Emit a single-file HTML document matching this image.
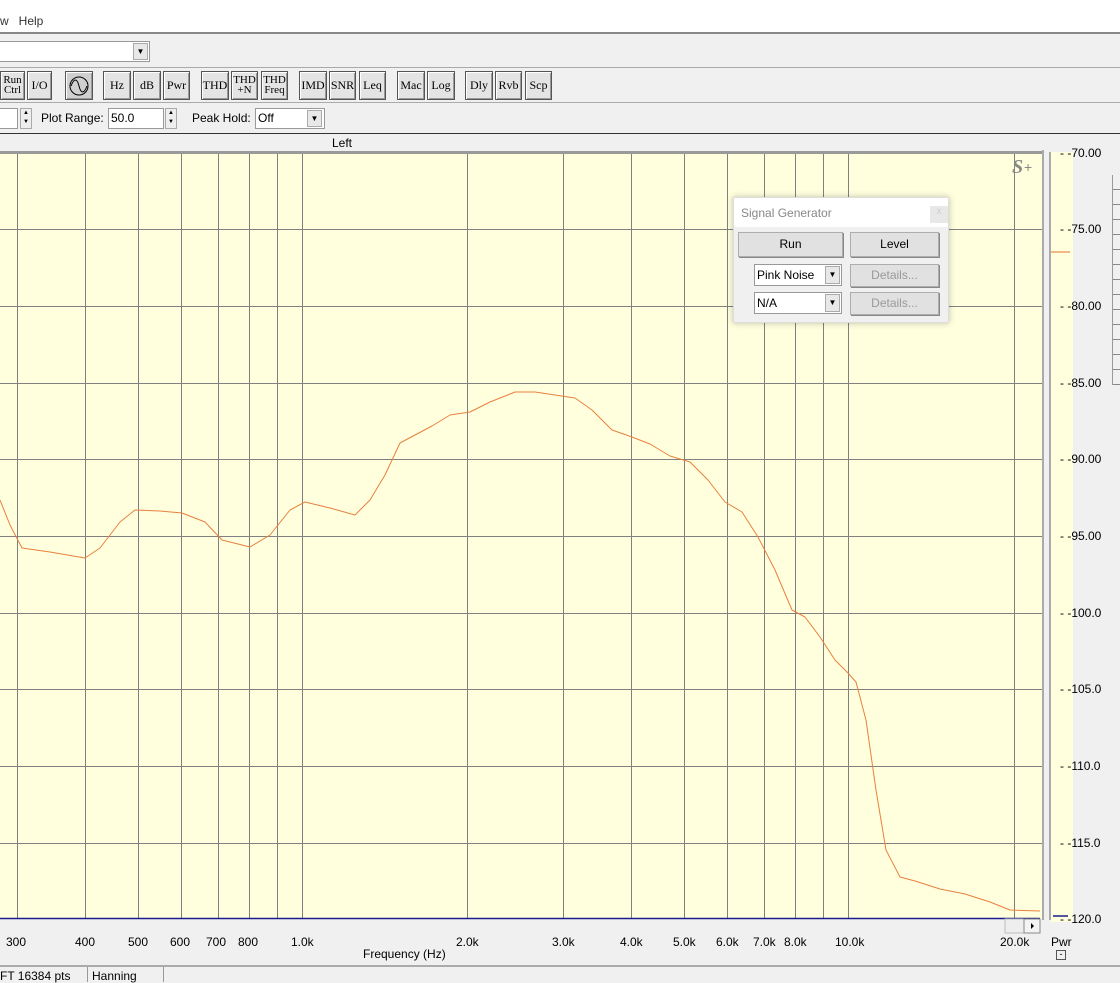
<!DOCTYPE html>
<html><head><meta charset="utf-8"><style>
*{margin:0;padding:0;box-sizing:border-box}
body{width:1120px;height:982px;background:#f0f0f0;position:relative;overflow:hidden;font-family:"Liberation Sans",sans-serif;font-size:12px;color:#000}
.a{position:absolute}
.btn{position:absolute;top:71px;height:29px;background:#e4e4e4;border:1px solid #555;box-shadow:inset 1px 1px 0 #fff,inset -1px -1px 0 #999;font-family:"Liberation Serif",serif;font-size:12px;text-align:center;line-height:27px}
.btn.t{line-height:10px;padding-top:3px;font-size:11px}
.inp{position:absolute;background:#fff;border:1px solid #999;font-size:12px;padding-left:2px}
.dd{position:absolute;width:15px;background:#e8e8e8;border:1px solid #aaa;font-size:8px;text-align:center}
.wb{position:absolute;background:#e1e1e1;border:1px solid #adadad;box-shadow:1px 1px 0 #888;text-align:center;font-size:12px}
.yl{position:absolute;left:1060px;font-size:12px}
.xl{position:absolute;top:935px;font-size:12px}
</style></head><body>
<div class="a" style="left:0;top:0;width:1120px;height:32px;background:#fff"></div>
<div class="a" style="left:0;top:14px;font-size:12px;color:#333">w&nbsp;&nbsp;&nbsp;Help</div>
<div class="a" style="left:0;top:32px;width:1120px;height:2px;background:#888"></div>
<div class="inp" style="left:-2px;top:41px;width:152px;height:21px"></div>
<div class="dd" style="left:133px;top:43px;height:17px;line-height:15px">▼</div>
<div class="a" style="left:0;top:67px;width:1120px;height:1px;background:#aaa"></div>
<div class="btn t" style="left:0;width:25px">Run<br>Ctrl</div>
<div class="btn" style="left:27px;width:25px">I/O</div>
<div class="btn" style="left:65px;width:28px;background:#d0d0d0"><svg width="22" height="22" viewBox="0 0 22 22" style="margin-top:3px"><circle cx="11" cy="11" r="9" fill="none" stroke="#000"/><path d="M3 11 C6 3,9 3,11 11 S16 19,19 11" fill="none" stroke="#000"/></svg></div>
<div class="btn" style="left:103px;width:28px">Hz</div>
<div class="btn" style="left:133px;width:28px">dB</div>
<div class="btn" style="left:163px;width:27px">Pwr</div>
<div class="btn" style="left:201px;width:28px">THD</div>
<div class="btn t" style="left:231px;width:27px">THD<br>+N</div>
<div class="btn t" style="left:261px;width:27px">THD<br>Freq</div>
<div class="btn" style="left:299px;width:28px">IMD</div>
<div class="btn" style="left:329px;width:27px">SNR</div>
<div class="btn" style="left:359px;width:27px">Leq</div>
<div class="btn" style="left:397px;width:28px">Mac</div>
<div class="btn" style="left:427px;width:28px">Log</div>
<div class="btn" style="left:465px;width:28px">Dly</div>
<div class="btn" style="left:495px;width:27px">Rvb</div>
<div class="btn" style="left:525px;width:27px">Scp</div>
<div class="a" style="left:0;top:102px;width:1120px;height:1px;background:#aaa"></div>
<div class="inp" style="left:-2px;top:108px;width:20px;height:21px"></div>
<div class="a" style="left:20px;top:108px;width:12px;height:21px;border:1px solid #aaa;background:#eee;font-size:6px;line-height:9px;text-align:center">▲<br>▼</div>
<div class="a" style="left:41px;top:111px">Plot Range:</div>
<div class="inp" style="left:108px;top:108px;width:56px;height:21px;line-height:19px">50.0</div>
<div class="a" style="left:165px;top:108px;width:12px;height:21px;border:1px solid #aaa;background:#eee;font-size:6px;line-height:9px;text-align:center">▲<br>▼</div>
<div class="a" style="left:192px;top:111px">Peak Hold:</div>
<div class="inp" style="left:255px;top:108px;width:70px;height:21px;line-height:19px">Off</div>
<div class="dd" style="left:307px;top:110px;height:17px;line-height:15px">▼</div>
<div class="a" style="left:0;top:133px;width:1120px;height:1px;background:#333"></div>
<div class="a" style="left:332px;top:136px">Left</div>
<svg class="a" style="left:0;top:150px" width="1120" height="790">
<rect x="0" y="2" width="1042" height="767" fill="#ffffde"/>
<line x1="0" y1="2.5" x2="1042" y2="2.5" stroke="#999" stroke-width="3"/>
<line x1="1043" y1="0" x2="1043" y2="770" stroke="#aaa" stroke-width="2"/>
<g stroke="#808080" stroke-width="1">
<line x1="0" x2="1042" y1="79.5" y2="79.5"/><line x1="0" x2="1042" y1="156.5" y2="156.5"/><line x1="0" x2="1042" y1="233.5" y2="233.5"/><line x1="0" x2="1042" y1="309.5" y2="309.5"/><line x1="0" x2="1042" y1="386.5" y2="386.5"/><line x1="0" x2="1042" y1="463.5" y2="463.5"/><line x1="0" x2="1042" y1="539.5" y2="539.5"/><line x1="0" x2="1042" y1="616.5" y2="616.5"/><line x1="0" x2="1042" y1="693.5" y2="693.5"/>
<line y1="4" y2="768" x1="17.5" x2="17.5"/><line y1="4" y2="768" x1="85.5" x2="85.5"/><line y1="4" y2="768" x1="138.5" x2="138.5"/><line y1="4" y2="768" x1="181.5" x2="181.5"/><line y1="4" y2="768" x1="218.5" x2="218.5"/><line y1="4" y2="768" x1="249.5" x2="249.5"/><line y1="4" y2="768" x1="277.5" x2="277.5"/><line y1="4" y2="768" x1="302.5" x2="302.5"/><line y1="4" y2="768" x1="467.5" x2="467.5"/><line y1="4" y2="768" x1="563.5" x2="563.5"/><line y1="4" y2="768" x1="631.5" x2="631.5"/><line y1="4" y2="768" x1="684.5" x2="684.5"/><line y1="4" y2="768" x1="727.5" x2="727.5"/><line y1="4" y2="768" x1="764.5" x2="764.5"/><line y1="4" y2="768" x1="795.5" x2="795.5"/><line y1="4" y2="768" x1="823.5" x2="823.5"/><line y1="4" y2="768" x1="848.5" x2="848.5"/><line y1="4" y2="768" x1="1014.5" x2="1014.5"/>
</g>
<line x1="0" x2="1040" y1="768.5" y2="768.5" stroke="#1a1a8c" stroke-width="1.5"/>
<path d="M0 350 L10 375 L22 398 L50 402 L85 408 L100 398 L120 372 L135 360 L160 361 L182 363 L205 372 L222 390 L250 397 L270 385 L290 360 L305 352 L330 358 L355 365 L370 350 L385 325 L400 293 L415 285 L432 276 L450 265 L470 262 L490 252 L515 242 L535 242 L555 245 L575 248 L592 260 L612 280 L632 287 L650 294 L670 306 L690 312 L708 330 L725 352 L742 362 L758 387 L775 420 L792 460 L805 467 L820 487 L835 510 L848 523 L856 532 L866 570 L876 640 L886 700 L900 727 L915 731 L940 739 L965 744 L990 752 L1010 760 L1040 761" fill="none" stroke="#e8803f" stroke-width="1" stroke-linejoin="round"/>
<text x="1012" y="23" font-family="Liberation Serif" font-style="italic" font-weight="bold" font-size="20" fill="#888">S</text><text x="1024" y="22" font-size="14" fill="#888">+</text>
<rect x="1005" y="769" width="19" height="14" fill="#eee" stroke="#bbb"/><rect x="1024" y="769" width="16" height="14" fill="#f4f4f4" stroke="#888"/><path d="M1031 773 l3 3 l-3 3z" fill="#000"/>
<rect x="1049" y="2" width="2" height="768" fill="#aaa"/>
<rect x="1051" y="2" width="22" height="770" fill="#ffffde"/>
<line x1="1051" x2="1070" y1="102" y2="102" stroke="#e07030"/>
<line x1="1053" x2="1068" y1="766" y2="766" stroke="#1a1a8c" stroke-width="1.5"/>
</svg>
<div class="yl" style="top:146px">- -70.00</div>
<div class="yl" style="top:222px">- -75.00</div>
<div class="yl" style="top:299px">- -80.00</div>
<div class="yl" style="top:376px">- -85.00</div>
<div class="yl" style="top:452px">- -90.00</div>
<div class="yl" style="top:529px">- -95.00</div>
<div class="yl" style="top:606px">- -100.0</div>
<div class="yl" style="top:682px">- -105.0</div>
<div class="yl" style="top:759px">- -110.0</div>
<div class="yl" style="top:836px">- -115.0</div>
<div class="yl" style="top:912px">- -120.0</div>
<div class="a" style="left:1112px;top:175px;width:8px;height:210px;border-left:1px solid #999;background:repeating-linear-gradient(#f0f0f0 0 14px,#888 14px 15px)"></div>
<div class="xl" style="left:6px">300</div><div class="xl" style="left:75px">400</div><div class="xl" style="left:128px">500</div><div class="xl" style="left:170px">600</div><div class="xl" style="left:206px">700</div><div class="xl" style="left:238px">800</div><div class="xl" style="left:291px">1.0k</div><div class="xl" style="left:456px">2.0k</div><div class="xl" style="left:552px">3.0k</div><div class="xl" style="left:620px">4.0k</div><div class="xl" style="left:673px">5.0k</div><div class="xl" style="left:716px">6.0k</div><div class="xl" style="left:753px">7.0k</div><div class="xl" style="left:784px">8.0k</div><div class="xl" style="left:835px">10.0k</div><div class="xl" style="left:1000px">20.0k</div>
<div class="a" style="left:1051px;top:935px">Pwr</div>
<div class="a" style="left:1056px;top:950px;width:10px;height:10px;border:1px solid #555;font-size:9px;line-height:7px;text-align:center">-</div>
<div class="a" style="left:363px;top:947px">Frequency (Hz)</div>
<div class="a" style="left:0;top:965px;width:1120px;height:2px;background:#aaa"></div>
<div class="a" style="left:0;top:969px">FT 16384 pts</div>
<div class="a" style="left:87px;top:967px;width:1px;height:15px;background:#999"></div>
<div class="a" style="left:92px;top:969px">Hanning</div>
<div class="a" style="left:163px;top:967px;width:1px;height:15px;background:#999"></div>
<div class="a" style="left:733px;top:197px;width:216px;height:126px;background:#f0f0f0;border:1px solid #ddd;box-shadow:0 0 6px rgba(0,0,0,.25)">
<div class="a" style="left:0;top:0;width:214px;height:29px;background:#fff"></div>
<div class="a" style="left:7px;top:8px;color:#888">Signal Generator</div>
<div class="a" style="left:196px;top:8px;width:18px;height:17px;background:#e8e8e8;color:#ccc;text-align:center;font-size:10px">x</div>
<div class="wb" style="left:4px;top:34px;width:105px;height:25px;line-height:23px">Run</div>
<div class="wb" style="left:116px;top:34px;width:89px;height:25px;line-height:23px">Level</div>
<div class="inp" style="left:20px;top:66px;width:88px;height:22px;line-height:20px">Pink Noise</div>
<div class="dd" style="left:91px;top:68px;height:18px;line-height:16px">▼</div>
<div class="wb" style="left:116px;top:66px;width:89px;height:23px;line-height:21px;color:#999">Details...</div>
<div class="inp" style="left:20px;top:94px;width:88px;height:22px;line-height:20px">N/A</div>
<div class="dd" style="left:91px;top:96px;height:18px;line-height:16px">▼</div>
<div class="wb" style="left:116px;top:94px;width:89px;height:23px;line-height:21px;color:#999">Details...</div>
</div>
</body></html>
